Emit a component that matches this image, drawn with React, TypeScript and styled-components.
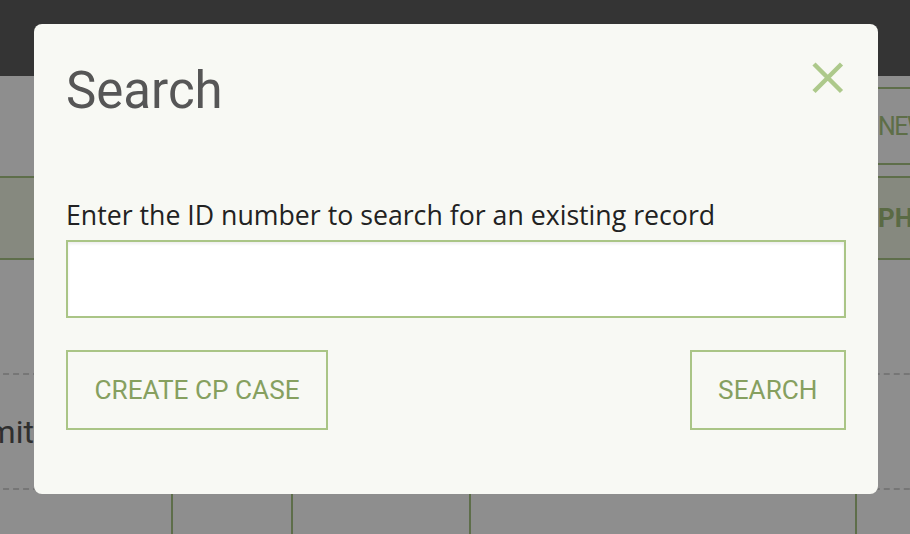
import React from "react";
import styled, { createGlobalStyle } from "styled-components";

const GlobalStyle = createGlobalStyle`
  html, body {
    margin: 0;
    padding: 0;
    overflow: hidden;
    background: #fff;
  }
  body {
    font-family: Roboto, "Liberation Sans", sans-serif;
  }
  * {
    box-sizing: border-box;
  }
`;

const green = "#aac586";

/* page that sits under the dialog */

const Page = styled.div`
  width: 910px;
  height: 534px;
  overflow: hidden;
  background: #fff;
`;

const AppBar = styled.header`
  height: 76px;
  background: #5e5e5e;
`;

const Toolbar = styled.div`
  display: flex;
  padding: 11px 0 11px 850px;
`;

const ToolButton = styled.button`
  flex-shrink: 0;
  height: 78px;
  padding: 0 26px;
  border: 2px solid ${green};
  background: transparent;
  color: #a9c681;
  font-family: inherit;
  font-size: 25px;
  letter-spacing: -1.5px;
  text-transform: uppercase;
  white-space: nowrap;
`;

const Table = styled.div`
  width: 1287px;
  margin-left: -87px;
`;

const columns = "258px 120px 178px 386px 345px";

const HeadRow = styled.div`
  display: grid;
  grid-template-columns: ${columns};
  height: 84px;
  border-top: 2px solid ${green};
  border-bottom: 2px solid ${green};
  background: #f1f7e5;
`;

const HeadCell = styled.div`
  display: flex;
  align-items: center;
  padding-left: 23px;
  color: #a2be7a;
  font-size: 26px;
  font-weight: 700;
  text-transform: uppercase;
  white-space: nowrap;
  overflow: hidden;
`;

const Row = styled.div`
  display: grid;
  grid-template-columns: ${columns};
  height: 115px;
  border-bottom: 2px dashed #d4d4d4;
`;

const Cell = styled.div<{ $first?: boolean }>`
  display: flex;
  align-items: center;
  padding-left: 20px;
  border-left: ${(p) => (p.$first ? "none" : `2px solid ${green}`)};
  color: #555;
  font-size: 32px;
  white-space: nowrap;
  overflow: hidden;
`;

/* dialog */

const Overlay = styled.div`
  position: fixed;
  inset: 0;
  display: flex;
  justify-content: center;
  align-items: flex-start;
  padding: 24px 0 0 2px;
  background: rgba(0, 0, 0, 0.443);
`;

const Dialog = styled.div`
  width: 844px;
  padding: 38px 32px 64px;
  border-radius: 8px;
  background: #f8f9f4;
`;

const DialogHead = styled.div`
  display: flex;
  justify-content: space-between;
  align-items: flex-start;
`;

const Title = styled.h2`
  margin: 0;
  color: #565656;
  font-size: 51px;
  font-weight: 400;
  line-height: 58px;
`;

const CloseButton = styled.button`
  display: flex;
  margin: 0 2px 0 0;
  padding: 0;
  border: none;
  background: none;
  cursor: pointer;
`;

const Label = styled.label`
  display: block;
  margin-top: 80px;
  color: #222;
  font-family: "Open Sans", Roboto, sans-serif;
  font-size: 26.7px;
  line-height: 30px;
`;

const Input = styled.input`
  display: block;
  width: 100%;
  height: 78px;
  margin-top: 10px;
  padding: 0 16px;
  border: 2px solid ${green};
  background: #fff;
  box-shadow: inset 0 2px 3px rgba(0, 0, 0, 0.07);
  font-family: inherit;
  font-size: 26px;
  outline: none;
`;

const Actions = styled.div`
  display: flex;
  justify-content: space-between;
  margin-top: 32px;
`;

const ActionButton = styled.button`
  height: 80px;
  padding: 0 26.5px;
  border: 2px solid ${green};
  background: transparent;
  color: #86a05f;
  font-family: inherit;
  font-size: 26.2px;
  text-transform: uppercase;
  white-space: nowrap;
  cursor: pointer;
`;

const CloseIcon = () => (
  <svg width="32" height="32" viewBox="0 0 32 32">
    <path
      d="M2 2 L29.5 29.5 M29.5 2 L2 29.5"
      stroke="#adc98b"
      strokeWidth="4.5"
      fill="none"
    />
  </svg>
);

const heads = ["", "Age", "Sex", "Location", "Phone"];

const rows = [
  ["Files", "", "", "", ""],
  ["Submitted", "", "", "", ""],
  ["", "", "", "", ""],
];

export default function App() {
  return (
    <>
      <GlobalStyle />
      <Page>
        <AppBar />
        <Toolbar>
          <ToolButton>New case</ToolButton>
        </Toolbar>
        <Table>
          <HeadRow>
            {heads.map((h, i) => (
              <HeadCell key={i}>{h}</HeadCell>
            ))}
          </HeadRow>
          {rows.map((r, i) => (
            <Row key={i}>
              {r.map((c, j) => (
                <Cell key={j} $first={j === 0}>
                  {c}
                </Cell>
              ))}
            </Row>
          ))}
        </Table>
      </Page>
      <Overlay>
        <Dialog>
          <DialogHead>
            <Title>Search</Title>
            <CloseButton aria-label="Close">
              <CloseIcon />
            </CloseButton>
          </DialogHead>
          <Label htmlFor="record-id">
            Enter the ID number to search for an existing record
          </Label>
          <Input id="record-id" type="text" />
          <Actions>
            <ActionButton>Create CP case</ActionButton>
            <ActionButton>Search</ActionButton>
          </Actions>
        </Dialog>
      </Overlay>
    </>
  );
}
